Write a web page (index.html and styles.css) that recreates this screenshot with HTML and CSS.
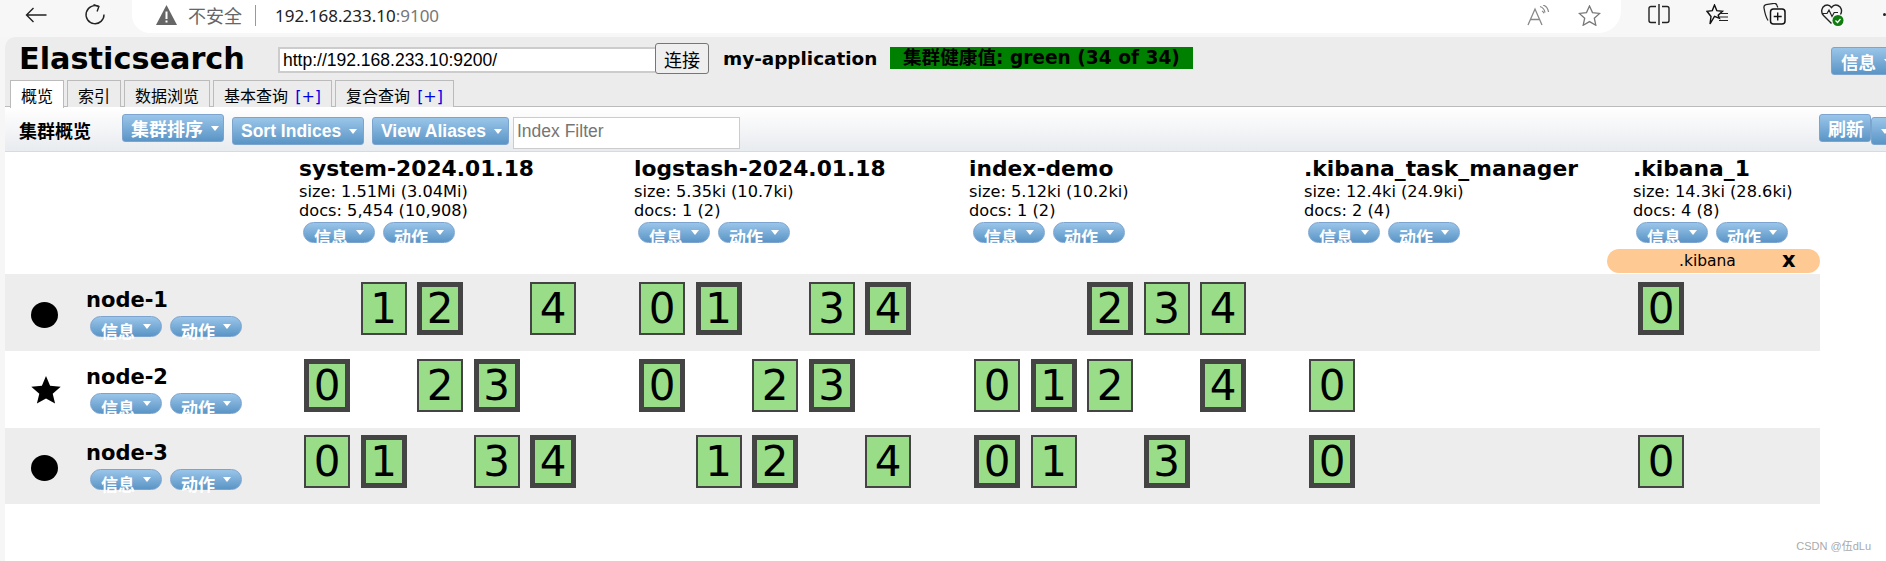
FILE: index.html
```html
<!DOCTYPE html>
<html lang="zh-CN">
<head>
    <meta charset="UTF-8">
    <meta name="viewport" content="width=device-width, initial-scale=1.0">
    <title>Elasticsearch</title>
    <link rel="stylesheet" href="styles.css">
</head>
<body>
    <!-- browser toolbar -->
    <div class="browser-bar">
        <svg class="nav-back" width="22" height="16" viewBox="0 0 22 16"><path d="M21.5 8H1.5M8.5 1L1.5 8l7 7" fill="none" stroke="#222" stroke-width="1.4"/></svg>
        <svg class="nav-reload" width="22" height="21" viewBox="0 0 22 21"><path d="M14.5 2.4A9 9 0 1 0 20 10.5" fill="none" stroke="#222" stroke-width="1.4"/><path d="M9.5 0.6l5.4 1.8-1.8 5.2" fill="none" stroke="#222" stroke-width="1.4"/></svg>
        <div class="address-bar">
            <svg width="21" height="20" viewBox="0 0 21 20"><path d="M10.5 0L21 20H0z" fill="#666"/><rect x="9.5" y="6.5" width="2" height="7.5" fill="#fff"/><rect x="9.5" y="15.5" width="2" height="2" fill="#fff"/></svg>
            <span class="not-secure">不安全</span>
            <span class="address-sep"></span>
            <span class="address-url">192.168.233.10<span class="address-port">:9100</span></span>
            <svg class="read-aloud" width="22" height="21" viewBox="0 0 22 21"><path d="M1 20L8 4l7 16M3.6 14.5h8.8" fill="none" stroke="#888" stroke-width="1.3"/><path d="M13 1.5c3 1 4.5 3 5 6M15 6c1 .4 1.6 1.2 2 2.2M16 0c3 1 5 3.5 5.5 7" fill="none" stroke="#888" stroke-width="1.2"/></svg>
            <svg class="fav-star" width="23" height="21" viewBox="0 0 23 21"><path d="M11.5 1l3 6.6 7.2.8-5.4 4.8 1.5 7-6.3-3.6-6.3 3.6 1.5-7L1.3 8.4l7.2-.8z" fill="none" stroke="#777" stroke-width="1.3"/></svg>
        </div>
        <svg class="tool-split" width="22" height="21" viewBox="0 0 22 21"><path d="M8 2.5H3a2 2 0 0 0-2 2v12a2 2 0 0 0 2 2h5M14 2.5h5a2 2 0 0 1 2 2v12a2 2 0 0 1-2 2h-5" fill="none" stroke="#222" stroke-width="1.4"/><path d="M11 0v21" stroke="#222" stroke-width="1.4"/></svg>
        <svg class="tool-favs" width="23" height="21" viewBox="0 0 23 21"><path d="M8.5 1l2.3 5.6 5.7.6-4.3 4 1.2 3-4.9-1.8L4 20l1-7.5L1 7.3l5.3-.7z" fill="none" stroke="#111" stroke-width="1.4"/><path d="M14 9.5h8M13.5 13h8.5M13 16.5h9" stroke="#222" stroke-width="1.2"/></svg>
        <svg class="tool-coll" width="23" height="22" viewBox="0 0 23 22"><path d="M5 17.5C2.8 14 1.5 8 1 5c-.3-1.8.6-3 2-3.3l8-1.300c1.500-.2 2.500.5 3 2l.8 2.100" fill="none" stroke="#222" stroke-width="1.3"/><rect x="7.5" y="6" width="14.5" height="15" rx="3" fill="none" stroke="#111" stroke-width="1.5"/><path d="M14.7 9.5v8M10.7 13.5h8" stroke="#111" stroke-width="1.4"/></svg>
        <svg class="tool-heart" width="23" height="24" viewBox="0 0 23 24"><path d="M10.5 20.5L2.5 12.5C-.5 9.5.5 4 4 2.5c2.5-1 5 0 6.5 2 1.500-2 4-3 6.500-2 3.500 1.500 4.500 5.500 2.500 9" fill="none" stroke="#222" stroke-width="1.4"/><path d="M1 10.5h5l2-3.5 3 6.5 2.2-4H17" fill="none" stroke="#222" stroke-width="1.2"/><circle cx="17" cy="17.5" r="5.5" fill="#107c10"/><path d="M14.5 17.5l2 2 3-3.5" fill="none" stroke="#fff" stroke-width="1.2"/></svg>
        <span class="tool-more"></span>
    </div>

    <div class="app">
        <div class="app-header">
            <div class="header-top">
                <h1 class="app-title">Elasticsearch</h1>
                <input class="url-input" type="text" value="http://192.168.233.10:9200/">
                <button class="connect-btn" type="button">连接</button>
                <span class="cluster-name">my-application</span>
                <span class="cluster-health">集群健康值: green (34 of 34)</span>
                <span class="btn btn-top">信息<i class="caret"></i></span>
            </div>
            <div class="tabs">
                <span class="tab active">概览</span>
                <span class="tab">索引</span>
                <span class="tab">数据浏览</span>
                <span class="tab">基本查询 <b>[+]</b></span>
                <span class="tab">复合查询 <b>[+]</b></span>
            </div>
        </div>

        <div class="toolbar">
            <span class="toolbar-label">集群概览</span>
            <span class="btn btn-first">集群排序<i class="caret"></i></span>
            <span class="btn btn-sort">Sort Indices<i class="caret"></i></span>
            <span class="btn btn-alias">View Aliases<i class="caret"></i></span>
            <input class="filter-input" type="text" placeholder="Index Filter">
            <span class="btn btn-refresh">刷新</span>
            <span class="btn btn-refresh-more"><i class="caret"></i></span>
        </div>

        <div class="grid grid-head">
            <div></div>
            <div class="index">
                <div class="index-name">system-2024.01.18</div>
                <div class="index-stat">size: 1.51Mi (3.04Mi)</div>
                <div class="index-stat">docs: 5,454 (10,908)</div>
                <div class="pills"><span class="pill">信息<i class="caret"></i></span><span class="pill">动作<i class="caret"></i></span></div>
            </div>
            <div class="index">
                <div class="index-name">logstash-2024.01.18</div>
                <div class="index-stat">size: 5.35ki (10.7ki)</div>
                <div class="index-stat">docs: 1 (2)</div>
                <div class="pills"><span class="pill">信息<i class="caret"></i></span><span class="pill">动作<i class="caret"></i></span></div>
            </div>
            <div class="index">
                <div class="index-name">index-demo</div>
                <div class="index-stat">size: 5.12ki (10.2ki)</div>
                <div class="index-stat">docs: 1 (2)</div>
                <div class="pills"><span class="pill">信息<i class="caret"></i></span><span class="pill">动作<i class="caret"></i></span></div>
            </div>
            <div class="index">
                <div class="index-name">.kibana_task_manager</div>
                <div class="index-stat">size: 12.4ki (24.9ki)</div>
                <div class="index-stat">docs: 2 (4)</div>
                <div class="pills"><span class="pill">信息<i class="caret"></i></span><span class="pill">动作<i class="caret"></i></span></div>
            </div>
            <div class="index">
                <div class="index-name">.kibana_1</div>
                <div class="index-stat">size: 14.3ki (28.6ki)</div>
                <div class="index-stat">docs: 4 (8)</div>
                <div class="pills pills-last"><span class="pill">信息<i class="caret"></i></span><span class="pill">动作<i class="caret"></i></span></div>
                <div class="alias"><span class="alias-name">.kibana</span><b class="alias-close">x</b></div>
            </div>
        </div>

        <div class="grid node-row shaded">
            <div class="node">
                <span class="node-dot"></span>
                <div>
                    <div class="node-name">node-1</div>
                    <div class="pills"><span class="pill">信息<i class="caret"></i></span><span class="pill">动作<i class="caret"></i></span></div>
                </div>
            </div>
            <div class="shards"><span class="shard gap">0</span><span class="shard">1</span><span class="shard primary">2</span><span class="shard gap">3</span><span class="shard">4</span></div>
            <div class="shards"><span class="shard">0</span><span class="shard primary">1</span><span class="shard gap">2</span><span class="shard">3</span><span class="shard primary">4</span></div>
            <div class="shards"><span class="shard gap">0</span><span class="shard gap">1</span><span class="shard primary">2</span><span class="shard">3</span><span class="shard">4</span></div>
            <div class="shards"></div>
            <div class="shards"><span class="shard primary">0</span></div>
        </div>

        <div class="grid node-row">
            <div class="node">
                <svg class="node-star" width="30" height="28" viewBox="0 0 30 28"><path d="M15 0L19.1 9.8L29.7 10.7L21.7 17.7L24.1 27.5L15 22.5L5.9 27.5L8.3 17.7L.3 10.7L10.9 9.8z"/></svg>
                <div>
                    <div class="node-name">node-2</div>
                    <div class="pills"><span class="pill">信息<i class="caret"></i></span><span class="pill">动作<i class="caret"></i></span></div>
                </div>
            </div>
            <div class="shards"><span class="shard primary">0</span><span class="shard gap">1</span><span class="shard">2</span><span class="shard primary">3</span></div>
            <div class="shards"><span class="shard primary">0</span><span class="shard gap">1</span><span class="shard">2</span><span class="shard primary">3</span></div>
            <div class="shards"><span class="shard">0</span><span class="shard primary">1</span><span class="shard">2</span><span class="shard gap">3</span><span class="shard primary">4</span></div>
            <div class="shards"><span class="shard">0</span></div>
            <div class="shards"></div>
        </div>

        <div class="grid node-row node-row-last shaded">
            <div class="node">
                <span class="node-dot"></span>
                <div>
                    <div class="node-name">node-3</div>
                    <div class="pills"><span class="pill">信息<i class="caret"></i></span><span class="pill">动作<i class="caret"></i></span></div>
                </div>
            </div>
            <div class="shards"><span class="shard">0</span><span class="shard primary">1</span><span class="shard gap">2</span><span class="shard">3</span><span class="shard primary">4</span></div>
            <div class="shards"><span class="shard gap">0</span><span class="shard">1</span><span class="shard primary">2</span><span class="shard gap">3</span><span class="shard">4</span></div>
            <div class="shards"><span class="shard primary">0</span><span class="shard">1</span><span class="shard gap">2</span><span class="shard primary">3</span></div>
            <div class="shards"><span class="shard primary">0</span></div>
            <div class="shards"><span class="shard">0</span></div>
        </div>
    </div>

    <div class="watermark">CSDN @伍dLu</div>
</body>
</html>
```

FILE: styles.css
```css
* {
    box-sizing: border-box;
}
html, body {
    height: 100%;
}
body {
    position: relative;
    margin: 0;
    overflow: hidden;
    background: #f6f6f6;
    color: #000;
    font-family: "DejaVu Sans", "Noto Sans CJK SC", sans-serif;
}

/* browser toolbar */
.browser-bar {
    display: flex;
    align-items: flex-start;
    height: 37px;
    background: #f7f7f7;
}
.nav-back {
    margin: 7px 0 0 25px;
}
.nav-reload {
    margin: 4px 0 0 37px;
}
.address-bar {
    display: flex;
    align-items: center;
    width: 1489px;
    height: 33px;
    margin-left: 26px;
    padding: 0 0 3px 24px;
    background: #fff;
    border-radius: 0 0 22px 18px;
    font-family: "Noto Sans", "Noto Sans CJK SC", sans-serif;
}
.not-secure {
    margin-left: 11px;
    color: #666;
    font-size: 18px;
}
.address-sep {
    width: 1px;
    height: 21px;
    margin-left: 13px;
    background: #999;
}
.address-url {
    margin-left: 19px;
    color: #222;
    font-size: 17px;
}
.address-port {
    color: #777;
}
.read-aloud {
    margin-left: 1088px;
}
.fav-star {
    margin-left: 29px;
}
.tool-split {
    margin: 4px 0 0 27px;
}
.tool-favs {
    margin: 4px 0 0 36px;
}
.tool-coll {
    margin: 3px 0 0 34px;
}
.tool-heart {
    margin: 3px 0 0 35px;
}
.tool-more {
    width: 3px;
    height: 3px;
    margin: 13px 0 0 39px;
    border-radius: 50%;
    background: #222;
}

/* app header */
.app {
    margin-left: 5px;
    height: 524px;
    background: #fff;
    border-radius: 10px 0 0 0;
}
.app-header {
    height: 70px;
    background: #ececec;
    border-bottom: 1px solid #bbb;
    border-radius: 10px 0 0 0;
}
.header-top {
    display: flex;
    align-items: flex-start;
    height: 43px;
    padding-left: 14px;
}
.app-title {
    width: 259px;
    margin: 4px 0 0;
    font-size: 30.3px;
    line-height: 36px;
    font-weight: bold;
}
.url-input {
    width: 377px;
    height: 26px;
    margin-top: 10px;
    padding: 0 3px;
    background: #fff;
    border: 2px solid #ccc;
    border-right: 0;
    font-family: "Liberation Sans", sans-serif;
    font-size: 17.5px;
    color: #000;
}
.connect-btn {
    width: 54px;
    height: 31px;
    margin-top: 6px;
    padding: 0;
    background: #efefef;
    border: 1px solid #767676;
    border-radius: 3px;
    font-family: "Noto Sans CJK SC", sans-serif;
    font-size: 18px;
    color: #000;
}
.cluster-name {
    margin: 10px 0 0 14px;
    width: 167px;
    font-size: 18.4px;
    line-height: 24px;
    font-weight: bold;
}
.cluster-health {
    width: 303px;
    height: 22px;
    margin-top: 10px;
    padding-left: 13px;
    background: #008000;
    font-size: 18.6px;
    line-height: 22px;
    font-weight: bold;
    white-space: nowrap;
}
.btn-top {
    width: 70px;
    height: 28px;
    margin: 10px -15px 0 auto;
    padding-left: 9px;
}
.tabs {
    display: flex;
    gap: 3px;
    height: 27px;
    padding-left: 5px;
}
.tab {
    height: 27px;
    padding: 0 10px;
    background: #ececec;
    border: 1px solid #bbb;
    border-bottom: 0;
    font-size: 16px;
    line-height: 32px;
    white-space: nowrap;
}
.tab.active {
    background: #fff;
    height: 28px;
    position: relative;
}
.tab b {
    margin-left: 2px;
    font-weight: normal;
    color: #0000e6;
}

/* toolbar buttons */
.btn {
    display: flex;
    align-items: center;
    height: 28px;
    background: linear-gradient(#9ac5e9, #5a95c6);
    border: 1px solid #7da3cf;
    border-radius: 3px;
    color: #fff;
    font-family: "Liberation Sans", "Noto Sans CJK SC", sans-serif;
    font-size: 17.5px;
    font-weight: bold;
    white-space: nowrap;
}
.caret {
    flex: none;
    width: 0;
    height: 0;
    margin-left: 8px;
    border-top: 5px solid #fff;
    border-left: 4.5px solid transparent;
    border-right: 4.5px solid transparent;
}
.toolbar {
    display: flex;
    align-items: flex-start;
    height: 45px;
    padding-left: 14px;
    background: linear-gradient(#fff, #e8ebef);
    border-bottom: 1px solid #d6dbe0;
}
.toolbar-label {
    width: 103px;
    margin-top: 10px;
    font-family: "Noto Sans CJK SC", sans-serif;
    font-size: 18px;
    line-height: 26px;
    font-weight: bold;
}
.btn-first {
    width: 102px;
    margin-top: 7px;
    padding-left: 8px;
    font-size: 18px;
}
.btn-sort {
    width: 132px;
    margin: 10px 0 0 8px;
    padding-left: 8px;
}
.btn-alias {
    width: 137px;
    margin: 10px 0 0 8px;
    padding-left: 8px;
}
.filter-input {
    width: 227px;
    height: 32px;
    margin: 10px 0 0 4px;
    padding: 0 3px 4px;
    background: #fff;
    border: 1px solid #ccc;
    font-family: "Liberation Sans", sans-serif;
    font-size: 17.5px;
}
.btn-refresh {
    width: 52px;
    margin: 7px 0 0 auto;
    padding-left: 8px;
    font-size: 18px;
}
.btn-refresh-more {
    width: 30px;
    margin: 10px -15px 0 0;
    padding-left: 1px;
}

/* cluster overview */
.grid {
    display: grid;
    grid-template-columns: 289px 335px 335px 335px 329px 192px;
    width: 1815px;
}
.grid-head {
    height: 122px;
}
.index {
    padding: 4px 0 0 5px;
}
.index-name {
    font-size: 21.8px;
    line-height: 26px;
    font-weight: bold;
    white-space: nowrap;
}
.index-stat {
    font-size: 16.2px;
    line-height: 19px;
    white-space: nowrap;
}
.pills {
    display: flex;
    gap: 8px;
    margin: 2px 0 0 4px;
}
.pills-last {
    margin-left: 3px;
}
.pill {
    display: flex;
    align-items: flex-start;
    width: 72px;
    height: 21px;
    padding: 5px 0 0 10px;
    background: linear-gradient(#9ac5e9, #5a95c6);
    border: 1px solid #7da3cf;
    border-radius: 11px;
    color: #fff;
    font-family: "Noto Sans CJK SC", sans-serif;
    font-size: 17px;
    line-height: 17px;
    font-weight: bold;
    white-space: nowrap;
}
.pill .caret {
    margin-top: 2px;
}
.alias {
    display: flex;
    height: 24px;
    margin: 6px 0 0 -26px;
    padding-left: 72px;
    background: #ffc993;
    border-radius: 12px;
    font-size: 15.5px;
    line-height: 24px;
}
.alias-close {
    margin-left: 46px;
    font-size: 21px;
    line-height: 23px;
}
.node-row {
    height: 77px;
    padding-top: 8px;
}
.node-row-last {
    height: 76px;
    padding-top: 7px;
}
.shaded {
    background: #ededed;
}
.node {
    display: flex;
    align-items: flex-start;
    padding-left: 26px;
}
.node-dot {
    flex: none;
    width: 27px;
    height: 26px;
    margin: 20px 28px 0 0;
    border-radius: 50%;
    background: #000;
}
.node-star {
    flex: none;
    margin: 17px 25px 0 0;
}
.node-name {
    margin-top: 6px;
    font-size: 21px;
    line-height: 24px;
    font-weight: bold;
}
.node .pills {
    margin: 4px 0 0 4px;
}
.shards {
    display: flex;
    gap: 10.5px;
    padding-left: 10px;
}
.shard {
    width: 46px;
    height: 53px;
    background: #99dd88;
    border: 2px solid #444;
    font-size: 42px;
    line-height: 49px;
    text-align: center;
}
.shard.primary {
    border-width: 5px;
    line-height: 43px;
}
.shard.gap {
    visibility: hidden;
}

.watermark {
    position: absolute;
    right: 15px;
    bottom: 8px;
    color: #aaa;
    font-family: "Liberation Sans", "Noto Sans CJK SC", sans-serif;
    font-size: 11px;
}
```
